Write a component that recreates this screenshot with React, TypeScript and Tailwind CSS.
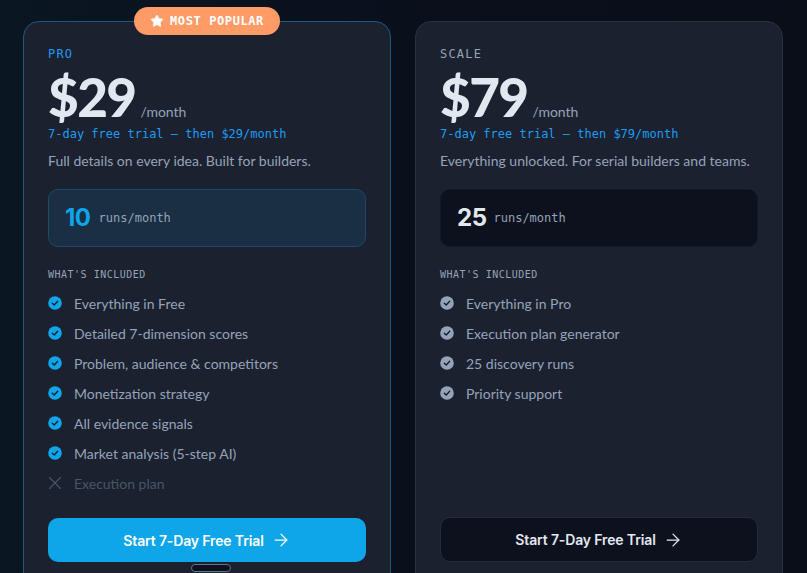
import { ArrowRight, Star, X } from "lucide-react";

const mono = "font-['DejaVu_Sans_Mono','Liberation_Mono',monospace]";
const body = "font-['Lato','Noto_Sans',sans-serif]";

function Check({ color }: { color: string }) {
  return (
    <svg width="14" height="14" viewBox="0 0 14 14" className="shrink-0">
      <circle cx="7" cy="7" r="6.8" fill={color} />
      <path d="M4.3 7.2 6.2 9 9.7 5.3" fill="none" stroke="#141a2a" strokeWidth="1.3" strokeLinecap="round" strokeLinejoin="round" />
    </svg>
  );
}

function Feature({ text, color, off }: { text: string; color: string; off?: boolean }) {
  return (
    <li className="flex h-[30px] items-center gap-3">
      {off ? <X size={22} strokeWidth={1.25} className="-mx-1 shrink-0 text-[#475569]" /> : <Check color={color} />}
      <span className={`text-[14px] ${off ? "text-[#475569]" : "text-[#94a3b8]"}`}>{text}</span>
    </li>
  );
}

type Plan = {
  name: string;
  price: string;
  tagline: string;
  runs: string;
  features: string[];
  off?: string;
  pro?: boolean;
};

function Card({ plan }: { plan: Plan }) {
  const { pro } = plan;
  return (
    <section
      className={`relative flex h-[600px] flex-col rounded-2xl border bg-[#1c2130] px-6 pt-6 ${
        pro ? "border-[#1b5a7d]" : "border-[#2b3040]"
      }`}
    >
      {pro && (
        <div className="absolute -top-[15px] left-1/2 flex h-7 w-[146px] -translate-x-1/2 items-center justify-center gap-[6px] rounded-full bg-[#ff9b66]">
          <Star size={14} fill="#fff" strokeWidth={1.5} className="text-white" />
          <span className={`${mono} text-[12px] font-bold tracking-[0.05em] text-white`}>MOST POPULAR</span>
        </div>
      )}
      <div className={`${mono} h-[18px] text-[12px] leading-[16px] tracking-[0.1em] ${pro ? "text-[#1e9bf0]" : "text-[#94a3b8]"}`}>
        {plan.name}
      </div>
      <div className="mt-[11px] flex h-[48px] items-end">
        <span className={`${body} mb-1 text-[53px] leading-[44px] font-black tracking-[-0.03em] text-[#e2e8f0]`}>{plan.price}</span>
        <span className={`${body} mb-px ml-[5px] text-[14px] leading-[20px] text-[#94a3b8]`}>/month</span>
      </div>
      <div className={`${mono} mt-[2px] h-[18px] text-[12px] leading-[18px] text-[#1e9bf0]`}>
        7-day free trial — then {plan.price}/month
      </div>
      <p className={`${body} mt-[8px] h-[20px] text-[14px] leading-[20px] text-[#94a3b8]`}>{plan.tagline}</p>
      <div
        className={`mt-[18px] flex h-[58px] items-center rounded-[10px] border px-4 ${
          pro ? "gap-2 border-[#1c4a68] bg-[#1a2e44]" : "gap-[7px] border-[#141826] bg-[#0d111d]"
        }`}
      >
        <span className={`font-['Inter',sans-serif] text-[24px] font-bold tracking-[-0.02em] ${pro ? "text-[#0ea5e9]" : "text-[#e2e8f0]"}`}>{plan.runs}</span>
        <span className={`${mono} text-[12px] text-[#94a3b8]`}>runs/month</span>
      </div>
      <div className={`${mono} mt-[20px] h-[15px] text-[10px] leading-[15px] tracking-[0.05em] text-[#94a3b8]`}>WHAT'S INCLUDED</div>
      <ul className={`${body} mt-[6px] h-[210px]`}>
        {plan.features.map((f) => (
          <Feature key={f} text={f} color={pro ? "#0ea5e9" : "#94a3b8"} />
        ))}
        {plan.off && <Feature text={plan.off} color="" off />}
      </ul>
      <button
        className={`flex items-center justify-center gap-[7px] rounded-[10px] font-['Inter',sans-serif] text-[14px] font-semibold tracking-[-0.01em] ${
          pro ? "mt-[20px] h-[44px] bg-[#0ea5e9] text-white" : "mt-[19px] h-[45px] border border-[#262b3a] bg-[#0d111d] text-[#e2e8f0]"
        }`}
      >
        Start 7-Day Free Trial
        <ArrowRight size={20} strokeWidth={1.5} />
      </button>
    </section>
  );
}

export default function App() {
  const plans: Plan[] = [
    {
      name: "PRO",
      price: "$29",
      tagline: "Full details on every idea. Built for builders.",
      runs: "10",
      features: [
        "Everything in Free",
        "Detailed 7-dimension scores",
        "Problem, audience & competitors",
        "Monetization strategy",
        "All evidence signals",
        "Market analysis (5-step AI)",
      ],
      off: "Execution plan",
      pro: true,
    },
    {
      name: "SCALE",
      price: "$79",
      tagline: "Everything unlocked. For serial builders and teams.",
      runs: "25",
      features: ["Everything in Pro", "Execution plan generator", "25 discovery runs", "Priority support"],
    },
  ];
  return (
    <main className="relative h-[573px] overflow-hidden bg-gradient-to-r from-[#0a1622] via-[#0a0f1c] to-[#0a0e19] pt-[21px] pr-6 pl-[23px]">
      <div className="grid grid-cols-2 gap-6">
        {plans.map((p) => (
          <Card key={p.name} plan={p} />
        ))}
      </div>
      <div className="absolute top-[564px] left-[191px] h-2 w-10 rounded-full border border-[#64748b] bg-[#0d111d]" />
    </main>
  );
}
